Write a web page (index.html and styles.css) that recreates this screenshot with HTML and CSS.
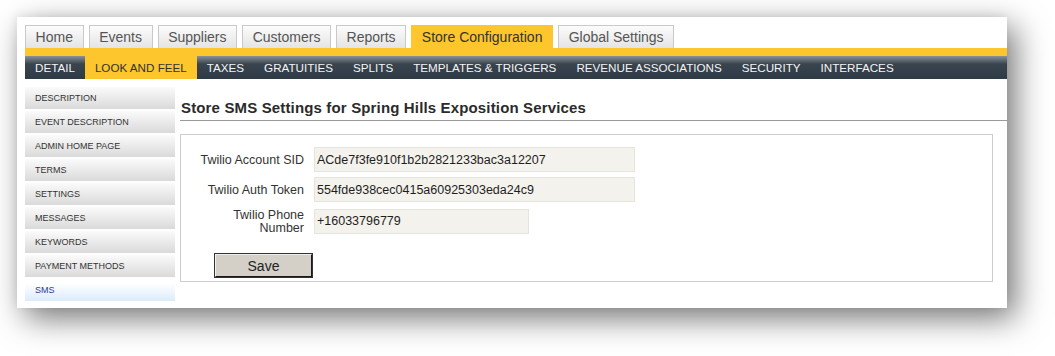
FILE: index.html
```html
<!DOCTYPE html>
<html lang="en">
<head>
  <meta charset="UTF-8">
  <title>Store SMS Settings</title>
  <link rel="stylesheet" href="styles.css">
</head>
<body>
  <div class="panel">
    <ul class="tabs">
      <li>Home</li>
      <li>Events</li>
      <li>Suppliers</li>
      <li>Customers</li>
      <li>Reports</li>
      <li class="active">Store Configuration</li>
      <li>Global Settings</li>
    </ul>
    <div class="tab-strip"></div>
    <ul class="subnav">
      <li>DETAIL</li>
      <li class="active">LOOK AND FEEL</li>
      <li>TAXES</li>
      <li>GRATUITIES</li>
      <li>SPLITS</li>
      <li>TEMPLATES &amp; TRIGGERS</li>
      <li>REVENUE ASSOCIATIONS</li>
      <li>SECURITY</li>
      <li>INTERFACES</li>
    </ul>

    <div class="content">
      <ul class="sidebar">
        <li>DESCRIPTION</li>
        <li>EVENT DESCRIPTION</li>
        <li>ADMIN HOME PAGE</li>
        <li>TERMS</li>
        <li>SETTINGS</li>
        <li>MESSAGES</li>
        <li>KEYWORDS</li>
        <li>PAYMENT METHODS</li>
        <li class="current">SMS</li>
      </ul>

      <div class="main">
        <h2>Store SMS Settings for Spring Hills Exposition Services</h2>
        <div class="form-box">
          <div class="row">
            <label>Twilio Account SID</label>
            <input type="text" class="wide" value="ACde7f3fe910f1b2b2821233bac3a12207">
          </div>
          <div class="row">
            <label>Twilio Auth Token</label>
            <input type="text" class="wide" value="554fde938cec0415a60925303eda24c9">
          </div>
          <div class="row">
            <label class="two-line">Twilio Phone<br>Number</label>
            <input type="text" class="short" value="+16033796779">
          </div>
          <button class="save">Save</button>
        </div>
      </div>
    </div>
  </div>
</body>
</html>
```

FILE: styles.css
```css
body {
  margin: 0;
  padding: 17px;
  min-height: 356px;
  box-sizing: border-box;
  background-color: #fff;
  font-family: 'Liberation Sans', Arial, sans-serif;
  color: #333;
}
ul {
  list-style: none;
  margin: 0;
  padding: 0;
}
.panel {
  width: 990px;
  height: 291px;
  background-color: #fff;
  box-shadow: 8px 10px 30px rgba(0, 0, 0, 0.55), -2px -2px 8px rgba(0, 0, 0, 0.06);
}
.tabs {
  display: flex;
  gap: 5px;
  padding: 8px 0 0 8px;
}
.tabs li {
  height: 22px;
  line-height: 22px;
  padding: 0 9.6px;
  border: 1px solid #c9c9c9;
  border-bottom: none;
  background: linear-gradient(#fcfcfc, #e4e4e4);
  font-size: 14px;
  color: #555;
}
.tabs li.active {
  background: #fcc62c;
  border-color: #fcc62c;
  color: #333;
}
.tab-strip {
  height: 8px;
  margin-left: 8px;
  background-color: #fcc62c;
}
.subnav {
  display: flex;
  height: 23px;
  margin-left: 8px;
  background: linear-gradient(#8a929a 0%, #39444f 35%, #2e3a45 100%);
}
.subnav li {
  padding: 0 10px;
  line-height: 23px;
  font-size: 11.65px;
  color: #f4f4f4;
}
.subnav li.active {
  background-color: #fcc62c;
  color: #333;
}
.content {
  display: flex;
  margin-left: 8px;
}
.sidebar {
  width: 150px;
  margin-top: 8px;
}
.sidebar li {
  height: 22px;
  line-height: 22px;
  margin-bottom: 2px;
  padding-left: 10px;
  font-size: 9px;
  color: #333;
  background: linear-gradient(#fbfbfb, #dadada);
}
.sidebar li.current {
  color: #2a3a9a;
  background: linear-gradient(#ffffff 20%, #dcebfb 100%);
}
.main {
  flex: 1;
  margin-left: 5px;
}
h2 {
  margin: 0;
  padding: 20px 0 4px 1px;
  line-height: 17px;
  font-size: 15px;
  letter-spacing: 0.15px;
  font-weight: bold;
  color: #2b2b2b;
  border-bottom: 1px solid #9a9a9a;
}
.form-box {
  height: 148px;
  margin: 13px 14px 0 0;
  padding-top: 12px;
  border: 1px solid #cccccc;
  box-sizing: border-box;
}
.row {
  display: flex;
  align-items: center;
  gap: 10px;
  margin-bottom: 5px;
}
.row label {
  width: 123px;
  text-align: right;
  font-size: 12.5px;
  color: #333;
}
.row label.two-line {
  line-height: 13px;
  padding-top: 2px;
}
.row input {
  height: 25px;
  box-sizing: border-box;
  padding: 0 2px;
  border: 1px solid #e7e4dd;
  background-color: #f4f2ec;
  font-family: 'Liberation Sans', Arial, sans-serif;
  font-size: 12.5px;
  color: #1e1e1e;
}
.row input.wide {
  width: 321px;
}
.row input.short {
  width: 215px;
}
.save {
  display: block;
  width: 99px;
  height: 25px;
  margin: 18px 0 0 33px;
  background-color: #d4d0c8;
  border: 2px solid;
  border-color: #f0f0f0 #1a1a1a #1a1a1a #f0f0f0;
  outline: 1px solid #333;
  outline-offset: -1px;
  font-family: 'Liberation Sans', Arial, sans-serif;
  font-size: 14px;
  color: #222;
}
```
